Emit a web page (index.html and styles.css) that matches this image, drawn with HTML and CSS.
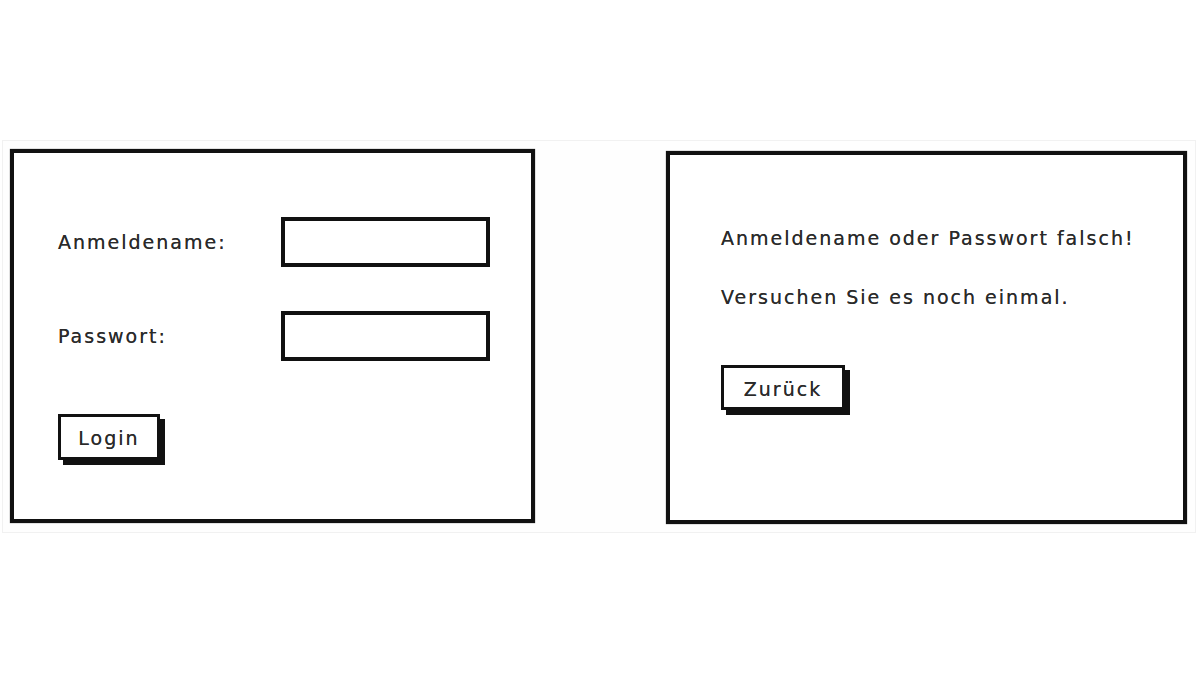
FILE: index.html
```html
<!DOCTYPE html>
<html lang="de">
<head>
    <meta charset="UTF-8">
    <meta name="viewport" content="width=device-width, initial-scale=1.0">
    <title>Login Mockup</title>
    <link rel="stylesheet" href="styles.css">
</head>
<body>
    <div class="sketch">
        <!-- Login-Dialog -->
        <div class="panel panel-login">
            <div class="form-grid">
                <label class="label" for="user">Anmeldename:</label>
                <input class="field" type="text" id="user">
                <label class="label" for="pass">Passwort:</label>
                <input class="field" type="password" id="pass">
            </div>
            <button class="btn btn-login">Login</button>
        </div>
        <!-- Fehlermeldung -->
        <div class="panel panel-error">
            <p class="message">Anmeldename oder Passwort falsch!</p>
            <p class="message message-second">Versuchen Sie es noch einmal.</p>
            <button class="btn btn-back">Zurück</button>
        </div>
    </div>
</body>
</html>
```

FILE: styles.css
```css
/* Balsamiq-artiges Wireframe */
body {
    margin: 0;
    background-color: #fff;
    font-family: 'DejaVu Sans', 'Liberation Sans', sans-serif;
    color: #2a2a2a;
}
.sketch {
    margin: 140px 0 0 2px;
    width: 1194px;
    height: 393px;
    box-sizing: border-box;
    border: 1px solid #f1f1f1;
    background-color: #fefefe;
    display: flex;
    align-items: flex-start;
    gap: 131px;
    padding: 8px 0 0 7px;
}
.panel {
    box-sizing: border-box;
    border: 4px solid #111;
    background-color: #fff;
    box-shadow: 0 0 1px #555;
}
.panel-login {
    width: 525px;
    height: 374px;
    padding: 64px 0 0 44px;
}
.panel-error {
    width: 521px;
    height: 373px;
    margin-top: 2px;
    padding: 71px 0 0 51px;
}
.form-grid {
    display: grid;
    grid-template-columns: 223px 209px;
    grid-auto-rows: 50px;
    row-gap: 44px;
    align-items: center;
}
.label, .message, .btn {
    font-size: 19px;
    letter-spacing: 2px;
    color: #2a2a2a;
    text-shadow: 0 0 0.6px #555;
}
.field {
    box-sizing: border-box;
    width: 209px;
    height: 50px;
    border: 4px solid #111;
    background-color: #fff;
    margin: 0;
    padding: 0;
    outline: none;
}
.btn {
    box-sizing: border-box;
    font-family: inherit;
    border: 3px solid #111;
    background-color: #fff;
    box-shadow: 5px 5px 0 #111;
    padding: 0;
    line-height: 24px;
    cursor: pointer;
}
.btn-login {
    display: block;
    width: 102px;
    height: 46px;
    margin-top: 53px;
    padding-top: 2px;
}
.message {
    margin: 0;
    line-height: 24px;
}
.message-second {
    margin-top: 35px;
}
.btn-back {
    display: block;
    width: 124px;
    height: 45px;
    margin-top: 56px;
    padding-top: 2px;
}
```
